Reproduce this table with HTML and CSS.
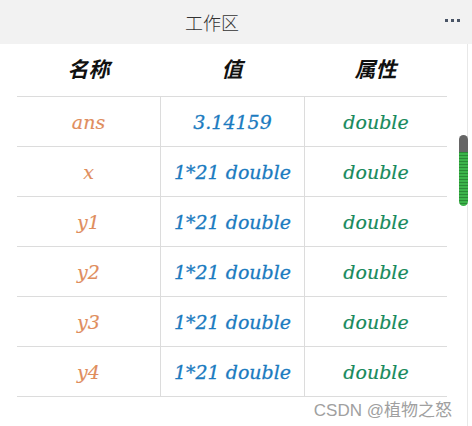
FILE: index.html
```
<!DOCTYPE html>
<html lang="zh">
<head>
<meta charset="utf-8">
<link rel="stylesheet" href="styles.css">
</head>
<body>
<div class="page">
  <header class="topbar">
    <div class="title">工作区</div>
    <div class="more"><span></span><span></span><span></span></div>
  </header>
  <div class="content">
    <div class="table">
      <div class="row head">
        <div class="cell">名称</div>
        <div class="cell">值</div>
        <div class="cell">属性</div>
      </div>
      <div class="row">
        <div class="cell name">ans</div>
        <div class="cell val">3.14159</div>
        <div class="cell type">double</div>
      </div>
      <div class="row">
        <div class="cell name">x</div>
        <div class="cell val">1*21 double</div>
        <div class="cell type">double</div>
      </div>
      <div class="row">
        <div class="cell name">y1</div>
        <div class="cell val">1*21 double</div>
        <div class="cell type">double</div>
      </div>
      <div class="row">
        <div class="cell name">y2</div>
        <div class="cell val">1*21 double</div>
        <div class="cell type">double</div>
      </div>
      <div class="row">
        <div class="cell name">y3</div>
        <div class="cell val">1*21 double</div>
        <div class="cell type">double</div>
      </div>
      <div class="row">
        <div class="cell name">y4</div>
        <div class="cell val">1*21 double</div>
        <div class="cell type">double</div>
      </div>
    </div>
    <div class="watermark">CSDN @植物之怒</div>
    <div class="scrollbar"></div>
  </div>
</div>
</body>
</html>
```
FILE: styles.css
```
html, body {
  margin: 0;
  padding: 0;
  background: #ffffff;
}
.page {
  width: 472px;
  height: 426px;
  overflow: hidden;
  font-family: "DejaVu Serif", "Noto Sans CJK SC", serif;
}
.topbar {
  height: 44px;
  background: #f2f2f2;
  position: relative;
  display: flex;
  align-items: center;
  justify-content: center;
}
.title {
  font-family: "Noto Sans CJK SC", sans-serif;
  font-size: 18px;
  font-weight: 300;
  color: #333333;
  margin-left: -48px;
  margin-top: -1px;
}
.more {
  position: absolute;
  right: 12px;
  top: 19px;
  display: flex;
  gap: 3px;
}
.more span {
  width: 3px;
  height: 3px;
  background: #4a5566;
}
.content {
  position: relative;
  height: 382px;
  border-right: 1px solid #e8e8e8;
  width: 467px;
}
.table {
  margin-left: 17px;
  width: 430px;
}
.row {
  display: grid;
  grid-template-columns: 143px 144px 143px;
  height: 49px;
  border-bottom: 1px solid #dcdcdc;
}
.row.head {
  height: 52px;
}
.cell {
  display: flex;
  align-items: center;
  justify-content: center;
  font-style: italic;
  font-size: 19px;
}
.cell + .cell {
  border-left: 1px solid #dcdcdc;
}
.row.head .cell {
  border-left: none;
  font-family: "Noto Sans CJK SC", sans-serif;
  font-weight: 700;
  font-size: 21px;
  color: #111111;
  padding-bottom: 4px;
}
.name {
  color: #e08d5d;
  -webkit-text-stroke: 0.15px #e08d5d;
}
.val {
  color: #1b7bc0;
  -webkit-text-stroke: 0.3px #1b7bc0;
}
.type {
  color: #178a5c;
  -webkit-text-stroke: 0.2px #178a5c;
}
.watermark {
  position: absolute;
  right: 15px;
  top: 352px;
  font-family: "Liberation Sans", "Noto Sans CJK SC", sans-serif;
  font-size: 17px;
  color: #a0a0a0;
}
.scrollbar {
  position: absolute;
  left: 459px;
  top: 91px;
  width: 9px;
  height: 71px;
  border-radius: 5px;
  background:
    linear-gradient(#666666 0, #666666 17px, transparent 17px),
    repeating-linear-gradient(#3cb44a 0, #3cb44a 2px, #2a8a36 2px, #2a8a36 3px);
}
```
